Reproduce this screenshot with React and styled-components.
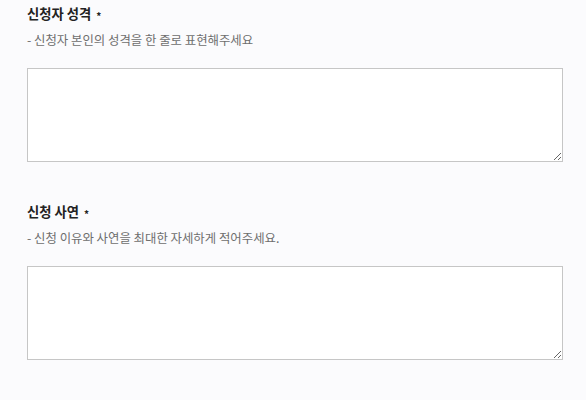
import React from 'react';
import styled, { createGlobalStyle } from 'styled-components';

const Global = createGlobalStyle`
  body {
    margin: 0;
    background: #fbfbfd;
    font-family: "Noto Sans CJK KR", "Noto Sans", sans-serif;
  }
`

const Container = styled.div`
  padding: 4px 23px 0 27px;
  display: flex;
  flex-direction: column;
  gap: 40px;
`
const Field = styled.div`
  display: flex;
  flex-direction: column;
`
const Title = styled.div`
  font-size: 13.3px;
  font-weight: 700;
  color: #222;
  line-height: 20px;
  height: 20px;
`
const Star = styled.span`
  font-size: 10px;
  margin-left: 5px;
  vertical-align: -1px;
`
const Desc = styled.div`
  font-size: 12.4px;
  color: #6e6e6e;
  line-height: 18px;
  margin-top: 7px;
`
const Area = styled.textarea`
  margin-top: 19px;
  box-sizing: border-box;
  width: 536px;
  height: 94px;
  border: 1px solid #c6c6c6;
  border-radius: 0;
  background: #fff;
  display: block;
  padding: 6px;
  font-family: inherit;
  outline: none;
`

const App = () => {
  return (
    <>
      <Global />
      <Container>
        <Field>
          <Title>신청자 성격<Star>*</Star></Title>
          <Desc>- 신청자 본인의 성격을 한 줄로 표현해주세요</Desc>
          <Area />
        </Field>
        <Field>
          <Title>신청 사연<Star>*</Star></Title>
          <Desc>- 신청 이유와 사연을 최대한 자세하게 적어주세요.</Desc>
          <Area />
        </Field>
      </Container>
    </>
  );
};

export default App;
